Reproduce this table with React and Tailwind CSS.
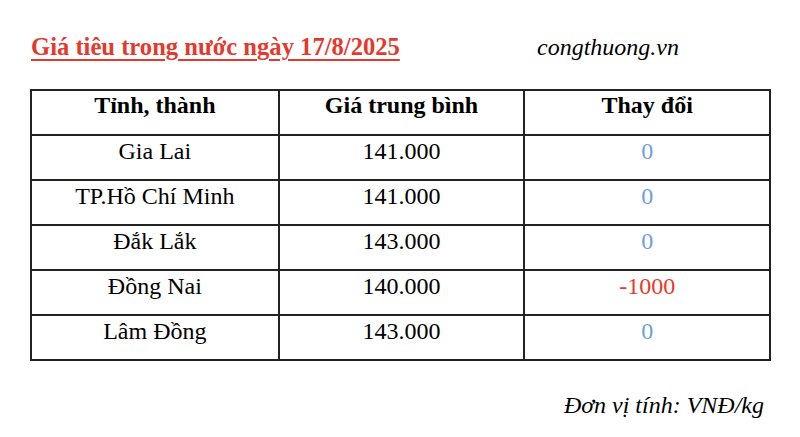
import React from "react";

const rows = [
  ["Gia Lai", "141.000", "0"],
  ["TP.Hồ Chí Minh", "141.000", "0"],
  ["Đắk Lắk", "143.000", "0"],
  ["Đồng Nai", "140.000", "-1000"],
  ["Lâm Đồng", "143.000", "0"],
];

export default function App() {
  return (
    <div className="w-[800px] h-[437px] bg-white text-black overflow-hidden font-['Liberation_Serif']">
      <div className="flex pt-[33px] text-[24px] leading-[28px]">
        <div className="pl-[31px] w-[537px] text-[24.6px] font-bold text-[#e5392d] underline decoration-[2px] underline-offset-[4px]">
          Giá tiêu trong nước ngày 17/8/2025
        </div>
        <div className="italic">congthuong.vn</div>
      </div>

      <div className="ml-[30px] mt-[28px] w-[741px] border-2 border-[#222] text-[24px] leading-[28px]">
        <div className="grid grid-cols-3 h-[43px] font-bold">
          <div className="text-center">Tỉnh, thành</div>
          <div className="text-center border-l-2 border-[#222]">Giá trung bình</div>
          <div className="text-center border-l-2 border-[#222]">Thay đổi</div>
        </div>
        {rows.map((r, i) => (
          <div key={i} className="grid grid-cols-3 h-[45px] border-t-2 border-[#222]">
            <div className="text-center pt-[1px]">{r[0]}</div>
            <div className="text-center pt-[1px] border-l-2 border-[#222]">{r[1]}</div>
            <div
              className={
                r[2] === "0"
                  ? "text-center pt-[1px] border-l-2 border-[#222] text-[#6fa0dc]"
                  : "text-center pt-[1px] border-l-2 border-[#222] text-[#e8392d]"
              }
            >
              {r[2]}
            </div>
          </div>
        ))}
      </div>

      <div className="mt-[30px] pr-[36px] text-right italic text-[24px] leading-[28px]">
        Đơn vị tính: VNĐ/kg
      </div>
    </div>
  );
}
